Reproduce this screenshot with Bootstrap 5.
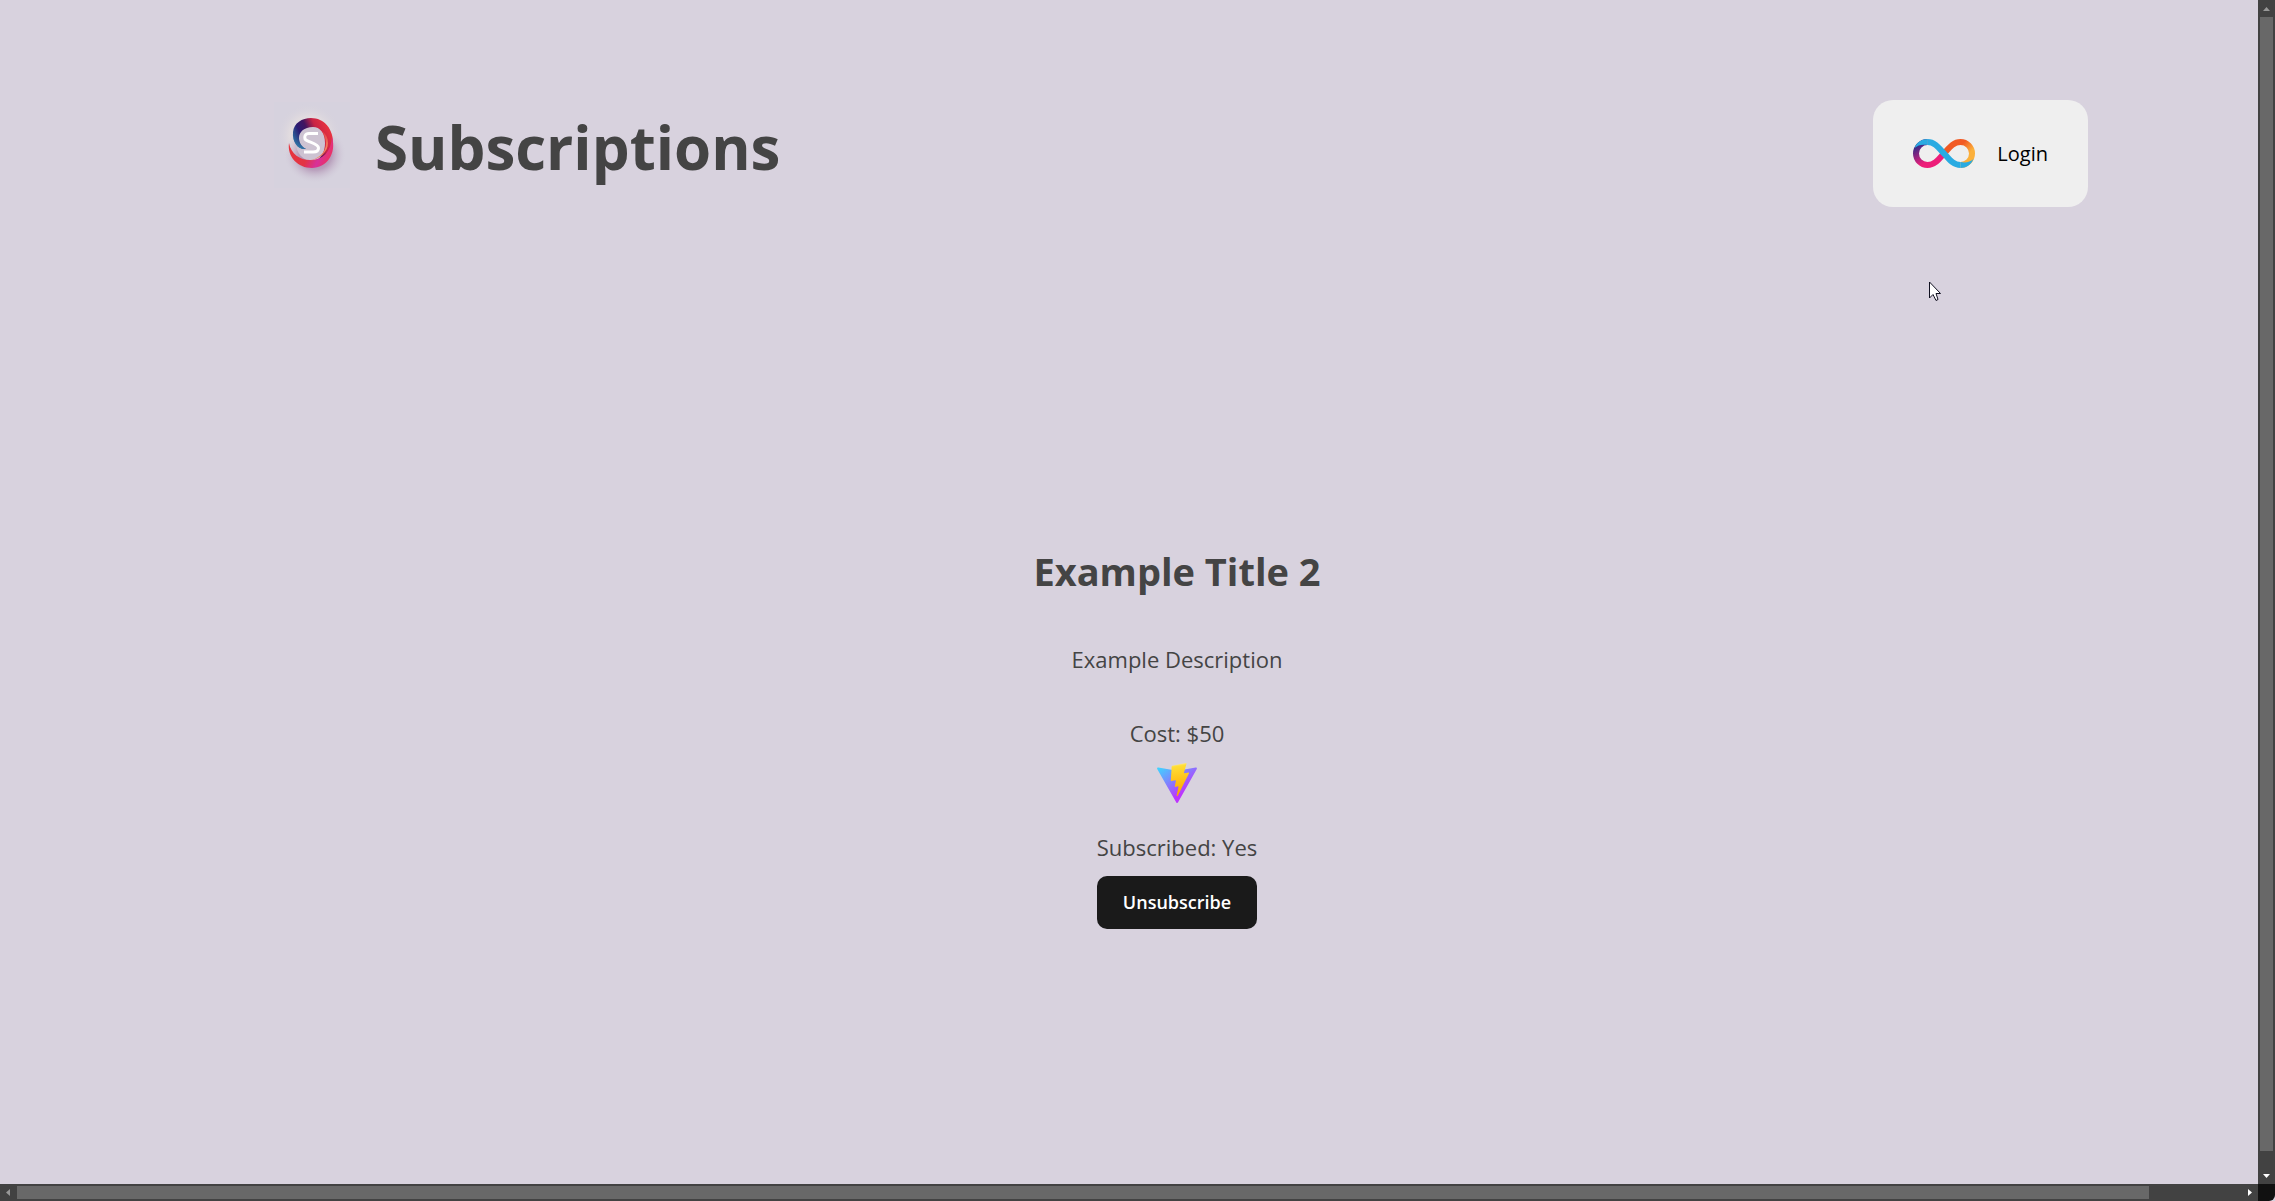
<!DOCTYPE html>
<html lang="en">
<head>
<meta charset="utf-8">
<meta name="viewport" content="width=device-width, initial-scale=1">
<title>Subscriptions</title>
<link href="https://cdn.jsdelivr.net/npm/bootstrap@5.3.0/dist/css/bootstrap.min.css" rel="stylesheet">
<style>
  body { background: #d8d2de; color: #444; font-family: "Open Sans", "Noto Sans", sans-serif; font-size: 22px; line-height: 36px; }
  .page-body { padding-left: 96px; min-width: 0; }
  .site-header { width: calc(100% - 344px); margin-left: 174px; padding-top: 100px; }
  .brand-logo { width: 90px; height: 90px; }
  .brand-title { font-size: 60px; line-height: 94px; margin-left: 15px; }
  .login-btn { background: #efefef; color: #000; border-radius: 20px; padding: 35px 40px; gap: 22px; font-size: 20px; font-weight: 500; line-height: 37px; border: 0; }
  .plan { padding-top: 332px; }
  .plan-title { font-size: 38px; line-height: 64px; }
  .plan-text { margin-top: 38px; }
  .plan-icon { margin: 12px 0 26px; }
  .unsub-btn { background: #1a1a1a; color: #fff; border-radius: 10px; border: 0; font-size: 18px; font-weight: 600; line-height: 29px; padding: 12px 26px; margin-top: 11px; }
  .vbar { width: 17px; background: #424242; padding: 0 2px; }
  .hbar { height: 17px; background: #424242; padding: 2px 0; }
  .bar-end { width: 17px; background: #111; border-bottom-right-radius: 6px; }
  .bar-thumb { background: #686868; }
  .hbar .bar-gap { width: 92px; }
  .vbar .bar-gap { height: 16px; }
  .pointer { position: absolute; left: 1929px; top: 281px; }
</style>
<script src="https://cdn.jsdelivr.net/npm/bootstrap@5.3.0/dist/js/bootstrap.bundle.min.js"></script>
</head>
<body class="vh-100 d-flex flex-column overflow-hidden">
<div class="d-flex flex-grow-1 overflow-hidden">
  <div class="page-body flex-grow-1">
    <header class="site-header d-flex justify-content-between align-items-start">
      <div class="d-flex align-items-start">
        <svg class="brand-logo" viewBox="0 0 90 90" aria-hidden="true">
          <defs>
            <linearGradient id="ringTop" x1="22" y1="44" x2="58" y2="28" gradientUnits="userSpaceOnUse">
              <stop offset="0" stop-color="#2b87ad"/><stop offset=".3" stop-color="#2b1b73"/><stop offset=".5" stop-color="#42155f"/><stop offset=".72" stop-color="#c92345"/><stop offset="1" stop-color="#e6323f"/>
            </linearGradient>
            <linearGradient id="ringLow" x1="24" y1="50" x2="58" y2="66" gradientUnits="userSpaceOnUse">
              <stop offset="0" stop-color="#e6353f"/><stop offset=".4" stop-color="#e23445"/><stop offset=".7" stop-color="#d7309a"/><stop offset="1" stop-color="#f0305a"/>
            </linearGradient>
            <linearGradient id="ringIn" x1="52" y1="28" x2="46" y2="60" gradientUnits="userSpaceOnUse">
              <stop offset="0" stop-color="#e03543"/><stop offset=".6" stop-color="#f5875f"/><stop offset="1" stop-color="#f56f50"/>
            </linearGradient>
            <linearGradient id="ringTail" x1="30" y1="36" x2="27" y2="50" gradientUnits="userSpaceOnUse">
              <stop offset="0" stop-color="#2b4f92" stop-opacity="0"/><stop offset="1" stop-color="#2f8fb3"/>
            </linearGradient>
            <radialGradient id="glow"><stop offset="0" stop-color="#e8e1e2"/><stop offset=".6" stop-color="#e1dbdf"/><stop offset="1" stop-color="#d5d1dc" stop-opacity="0"/></radialGradient>
            <radialGradient id="shade"><stop offset="0" stop-color="#96608f"/><stop offset=".55" stop-color="#af8fb1" stop-opacity=".75"/><stop offset="1" stop-color="#d2cddb" stop-opacity="0"/></radialGradient>
          </defs>
          <rect x="4" y="2" width="76" height="86" fill="#d5d2de" opacity=".7"/>
          <circle cx="39" cy="36" r="33" fill="url(#glow)"/>
          <ellipse cx="45" cy="54" rx="31" ry="29" fill="url(#shade)"/>
          <ellipse cx="42" cy="43" rx="16" ry="18" fill="#cdc3d2"/>
          <path fill="url(#ringTop)" d="M36 49C28 50 22 42 23 32C24 23 32 18 41 18C54 18 64 29 63 45C62 54 55 61 44 62C52 58 55 51 55 43C55 33 50 27 43 27C34 27 29 32 29 38C29 43 32 47 36 49Z"/>
          <path fill="url(#ringTail)" d="M36 49C28 50 22 42 23 32L29 36C28 42 32 47 36 49Z"/>
          <path fill="url(#ringLow)" d="M19 43C21 54 30 60 40 60C53 60 61 52 62 37C67 54 56 68 42 68C28 68 17 57 19 43Z"/>
          <path fill="url(#ringIn)" d="M52 31C59 42 58 56 39 61C50 59 58 52 58 43C58 38 56 34 52 31Z"/>
          <path fill="none" stroke="#fff" stroke-width="3" d="M48 33.500H39C34.500 33.500 34.500 37 35 39C36 42 48.500 43 48.500 48C48.500 51 46 52 43 52H34"/>
        </svg>
        <h1 class="brand-title fw-bold mb-0">Subscriptions</h1>
      </div>
      <button type="button" class="login-btn d-flex align-items-center">
        <svg width="62" height="29" viewBox="0 0 62 29" fill="none" aria-hidden="true">
          <defs>
            <linearGradient id="pk" x1="6" y1="4" x2="18" y2="26" gradientUnits="userSpaceOnUse"><stop offset=".1" stop-color="#3f2a86"/><stop offset=".8" stop-color="#ed1e79"/></linearGradient>
            <linearGradient id="og" x1="44" y1="5" x2="58" y2="18" gradientUnits="userSpaceOnUse"><stop offset=".2" stop-color="#f15a24"/><stop offset=".8" stop-color="#fbb03b"/></linearGradient>
          </defs>
          <g stroke-width="6">
            <path stroke="url(#pk)" d="M14.500 3A11.500 11.500 0 0 0 14.500 26C22 26 26 20 31 14.500"/>
            <path stroke="url(#og)" d="M31 14.500C36 9 40 3 47.500 3A11.500 11.500 0 0 1 47.500 26"/>
            <path stroke="#29abe2" d="M14.500 3C22 3 26 9 31 14.500C36 20 40 26 47.500 26"/>
          </g>
          <path fill="#29abe2" d="M1.500 9C4 3 9 0 14.500 0V6C9 5 5 6 1.500 9ZM60.500 20C58 26 53 29 47.500 29V23C53 24 57 23 60.500 20Z"/>
        </svg>
        <span>Login</span>
      </button>
    </header>
    <main class="plan d-flex flex-column align-items-center">
      <h2 class="plan-title fw-bold mb-0">Example Title 2</h2>
      <p class="plan-text mb-0">Example Description</p>
      <p class="plan-text mb-0">Cost: $50</p>
      <svg class="plan-icon" width="40" height="40" viewBox="0 0 256 257" role="img" aria-label="Vite">
        <defs>
          <linearGradient id="va" x1="-.828%" x2="57.636%" y1="7.652%" y2="78.411%"><stop offset="0" stop-color="#41D1FF"/><stop offset="1" stop-color="#BD34FE"/></linearGradient>
          <linearGradient id="vb" x1="43.376%" x2="50.316%" y1="2.242%" y2="89.030%"><stop offset="0" stop-color="#FFEA83"/><stop offset=".083" stop-color="#FFDD35"/><stop offset="1" stop-color="#FFA800"/></linearGradient>
        </defs>
        <path fill="url(#va)" d="M255.153 37.938L134.897 252.976c-2.483 4.440-8.862 4.466-11.382.048L.875 37.958c-2.746-4.814 1.371-10.646 6.827-9.670l120.385 21.517a6.537 6.537 0 0 0 2.322-.004l117.867-21.483c5.438-.991 9.574 4.796 6.877 9.620Z"/>
        <path fill="url(#vb)" d="M185.432.063L96.440 17.501a3.268 3.268 0 0 0-2.634 3.014l-5.474 92.456a3.268 3.268 0 0 0 3.997 3.378l24.777-5.718c2.318-.535 4.413 1.507 3.936 3.838l-7.361 36.047c-.495 2.426 1.782 4.500 4.151 3.780l15.304-4.649c2.372-.720 4.652 1.360 4.150 3.788l-11.698 56.621c-.732 3.542 3.979 5.473 5.943 2.437l1.313-2.028l72.516-144.720c1.215-2.423-.880-5.186-3.540-4.672l-25.505 4.922c-2.396.462-4.435-1.770-3.759-4.114l16.646-57.705c.677-2.350-1.370-4.583-3.769-4.113Z"/>
      </svg>
      <p class="mb-0">Subscribed: Yes</p>
      <button type="button" class="unsub-btn">Unsubscribe</button>
    </main>
  </div>
  <div class="vbar d-flex flex-column" aria-hidden="true">
    <svg width="13" height="17" viewBox="0 0 13 17"><path fill="#989898" d="M3 11L6.500 7L10 11Z"/></svg>
    <div class="bar-thumb flex-grow-1"></div>
    <div class="bar-gap"></div>
    <svg width="13" height="17" viewBox="0 0 13 17"><path fill="#fff" d="M3 7H10L6.500 11Z"/></svg>
  </div>
</div>
<div class="d-flex" aria-hidden="true">
  <div class="hbar d-flex flex-grow-1">
    <svg width="17" height="13" viewBox="0 0 17 13"><path fill="#989898" d="M10 3V10L6 6.500Z"/></svg>
    <div class="bar-thumb flex-grow-1"></div>
    <div class="bar-gap"></div>
    <svg width="17" height="13" viewBox="0 0 17 13"><path fill="#fff" d="M7 3V10L11 6.500Z"/></svg>
  </div>
  <div class="bar-end"></div>
</div>
<svg class="pointer" width="13" height="21" viewBox="0 0 13 21" aria-hidden="true"><path fill="#fff" stroke="#101020" d="M.500 1V17L4 13.500L7 19.500L9 18.500L7 12.500H11.500Z"/></svg>
</body>
</html>
